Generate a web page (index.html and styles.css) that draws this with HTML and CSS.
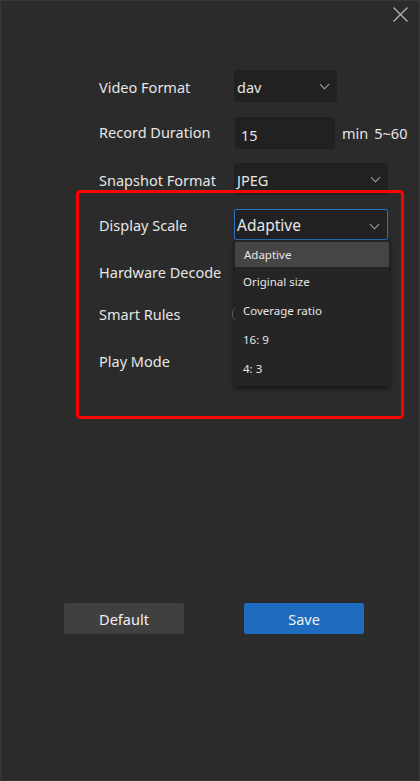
FILE: index.html
```html
<!DOCTYPE html>
<html lang="en">
<head>
<meta charset="utf-8">
<title>Settings</title>
<link rel="stylesheet" href="styles.css">
</head>
<body>
<div class="window">
  <div class="header">
    <button class="close" aria-label="Close">
      <svg width="15" height="15" viewBox="0 0 15 15"><path d="M0.5 0.5L14.5 14.5M14.5 0.5L0.5 14.5" stroke="#b5b5b5" stroke-width="1.3" fill="none"/></svg>
    </button>
  </div>
  <div class="form">
    <div class="row r-video">
      <span class="label">Video Format</span>
      <div class="select w-sm"><span class="val">dav</span><span class="chev"></span></div>
    </div>
    <div class="row r-record">
      <span class="label">Record Duration</span>
      <div class="input"><span class="val">15</span></div>
      <span class="unit">min</span><span class="range">5~60</span>
    </div>
    <div class="row r-snap">
      <span class="label">Snapshot Format</span>
      <div class="select w-lg"><span class="val">JPEG</span><span class="chev"></span></div>
    </div>
    <div class="row r-display">
      <span class="label">Display Scale</span>
      <div class="select w-lg focused"><span class="val big">Adaptive</span><span class="chev"></span>
        <ul class="dropdown">
          <li class="active">Adaptive</li>
          <li>Original size</li>
          <li>Coverage ratio</li>
          <li>16: 9</li>
          <li>4: 3</li>
        </ul>
      </div>
    </div>
    <div class="row r-hw">
      <span class="label">Hardware Decode</span>
      <span class="toggle hidden-under"></span>
    </div>
    <div class="row r-smart">
      <span class="label">Smart Rules</span>
      <span class="toggle"></span>
    </div>
    <div class="row r-play">
      <span class="label">Play Mode</span>
    </div>
  </div>
  <div class="footer">
    <button class="btn btn-default">Default</button>
    <button class="btn btn-save">Save</button>
  </div>
  <div class="highlight-box"></div>
</div>
</body>
</html>
```
FILE: styles.css
```css
* { box-sizing: border-box; }
html, body { margin: 0; padding: 0; background: #2b2b2b; }
body { font-family: "Noto Sans", "Open Sans", sans-serif; color: #e6e6e6; }

.window {
  position: relative;
  width: 420px;
  height: 781px;
  background: #2b2b2b;
  border: 1px solid #383838;
  overflow: hidden;
}

.header {
  height: 30px;
  display: flex;
  justify-content: flex-end;
  align-items: flex-start;
  padding: 6px 11px 0 0;
}
.close {
  background: none;
  border: 0;
  padding: 0;
  width: 15px;
  height: 15px;
  display: block;
}
.close svg { display: block; }

.form {
  padding: 39px 0 0 98px;
  display: flex;
  flex-direction: column;
}
.row {
  height: 32px;
  display: flex;
  align-items: center;
}
.r-record { margin-top: 15px; }
.r-snap { margin-top: 14px; }
.r-display { margin-top: 13px; }
.r-hw { margin-top: 15px; }
.r-smart { margin-top: 10px; }
.r-play { margin-top: 15px; }

.label {
  width: 135px;
  font-size: 14.5px;
  line-height: 20px;
  margin-top: 1px;
}
.r-video .label { margin-top: 2px; }
.r-record .label { margin-top: -3px; }

.select, .input {
  position: relative;
  height: 32px;
  background: #212121;
  border-radius: 3px;
  display: flex;
  align-items: center;
  padding-left: 3px;
  font-size: 14.5px;
}
.w-sm { width: 103px; }
.w-lg { width: 154px; }
.input { width: 100px; margin-left: 1px; padding-left: 6px; }
.input .val { margin-top: 4px; }
.select .val { margin-top: 2px; }
.val.big { font-size: 15.5px; }
.select.focused {
  border: 1px solid #2a73c4;
  border-radius: 2px;
  padding-left: 2px;
  height: 31px;
}
.chev {
  position: absolute;
  right: 9px;
  top: 11px;
  width: 7px;
  height: 7px;
  border-right: 1.2px solid #a0a0a0;
  border-bottom: 1.2px solid #a0a0a0;
  transform: rotate(45deg);
}
.unit { margin-left: 7px; font-size: 14.5px; margin-top: -1px; }
.range { margin-left: 6px; font-size: 14.5px; margin-top: -1px; }

.dropdown {
  position: absolute;
  top: 30px;
  left: 0;
  width: 154px;
  margin: 0;
  padding: 2px 0 3px;
  list-style: none;
  background: #252525;
  box-shadow: 0 2px 5px rgba(0,0,0,0.6);
  z-index: 3;
}
.dropdown li {
  height: 28.8px;
  display: flex;
  align-items: center;
  padding-left: 8px;
  font-size: 11.5px;
  color: #e6e6e6;
}
.dropdown li.active { background: #454545; height: 25px; padding-left: 9px; margin-bottom: 1px; }

.toggle {
  width: 40px;
  height: 18px;
  border-radius: 9px;
  border: 1px solid #6a6a6a;
  margin-left: -2px;
  margin-top: 2px;
}
.toggle.hidden-under { margin-left: 4px; }

.footer {
  margin-top: 227px;
  padding-left: 63px;
  display: flex;
  gap: 60px;
}
.btn {
  width: 120px;
  height: 31px;
  border: 0;
  border-radius: 2px;
  font-family: "Noto Sans", "Open Sans", sans-serif;
  font-size: 14.5px;
  color: #f0f0f0;
  padding: 0;
}
.btn-default { background: #404040; }
.btn-save { background: #1e6bc0; }

.highlight-box {
  position: absolute;
  left: 75px;
  top: 189px;
  width: 328px;
  height: 229px;
  border: 3px solid #ff0000;
  border-radius: 4px;
  pointer-events: none;
  z-index: 5;
}
```
